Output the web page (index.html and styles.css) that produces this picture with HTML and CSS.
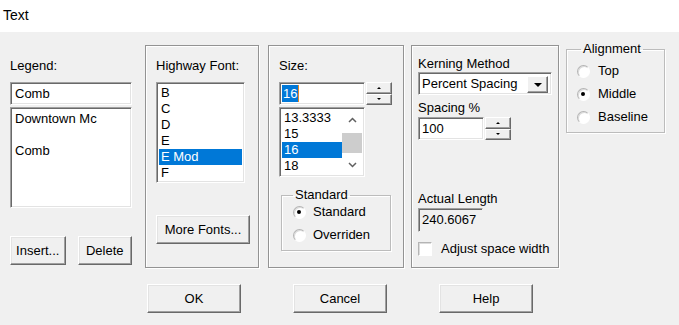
FILE: index.html
```html
<!DOCTYPE html>
<html lang="en">
<head>
    <meta charset="UTF-8">
    <title>Text</title>
    <link rel="stylesheet" href="styles.css">
</head>
<body>
    <div class="caption">Text</div>

    <div class="dialog">
        <div class="panels">

            <!-- legend text -->
            <div class="legend-col">
                <div class="label">Legend:</div>
                <div class="field legend-input">Comb</div>
                <div class="field legend-list">
                    <div class="line">Downtown Mc</div>
                    <div class="line"></div>
                    <div class="line">Comb</div>
                </div>
                <div class="legend-buttons">
                    <div class="button insert">Insert...</div>
                    <div class="button delete">Delete</div>
                </div>
            </div>

            <!-- font -->
            <div class="panel font-panel">
                <div class="label">Highway Font:</div>
                <div class="field font-list">
                    <div class="item">B</div>
                    <div class="item">C</div>
                    <div class="item">D</div>
                    <div class="item">E</div>
                    <div class="item selected">E Mod</div>
                    <div class="item">F</div>
                </div>
                <div class="button more-fonts">More Fonts...</div>
            </div>

            <!-- size -->
            <div class="panel size-panel">
                <div class="label">Size:</div>
                <div class="spin-row">
                    <div class="field size-input"><span class="sel">16</span></div>
                    <div class="spin">
                        <div class="spin-btn"><span class="up"></span></div>
                        <div class="spin-btn"><span class="down"></span></div>
                    </div>
                </div>
                <div class="field size-list">
                    <div class="size-items">
                        <div class="item">13.3333</div>
                        <div class="item">15</div>
                        <div class="item selected">16</div>
                        <div class="item">18</div>
                    </div>
                    <div class="scrollbar">
                        <svg width="9" height="6" viewBox="0 0 9 6"><path d="M1 5 L4.5 1.5 L8 5" fill="none" stroke="#606060" stroke-width="1.5"/></svg>
                        <div class="thumb"></div>
                        <svg width="9" height="6" viewBox="0 0 9 6"><path d="M1 1 L4.5 4.5 L8 1" fill="none" stroke="#606060" stroke-width="1.5"/></svg>
                    </div>
                </div>
                <fieldset class="group standard-group">
                    <legend>Standard</legend>
                    <div class="option"><span class="radio checked"></span>Standard</div>
                    <div class="option"><span class="radio"></span>Overriden</div>
                </fieldset>
            </div>

            <!-- kerning -->
            <div class="panel kern-panel">
                <div class="label">Kerning Method</div>
                <div class="field combo">
                    <div class="combo-text">Percent Spacing</div>
                    <div class="combo-btn"><span class="arrow"></span></div>
                </div>
                <div class="label spacing-label">Spacing %</div>
                <div class="spin-row spacing-row">
                    <div class="field spacing-input">100</div>
                    <div class="spin">
                        <div class="spin-btn"><span class="up"></span></div>
                        <div class="spin-btn"><span class="down"></span></div>
                    </div>
                </div>
                <div class="label length-label">Actual Length</div>
                <div class="field readonly">240.6067</div>
                <div class="check-row"><span class="checkbox"></span>Adjust space width</div>
            </div>

            <!-- alignment -->
            <fieldset class="group align-group">
                <legend>Alignment</legend>
                <div class="option"><span class="radio"></span>Top</div>
                <div class="option"><span class="radio checked"></span>Middle</div>
                <div class="option"><span class="radio"></span>Baseline</div>
            </fieldset>
        </div>

        <div class="actions">
            <div class="button">OK</div>
            <div class="button">Cancel</div>
            <div class="button">Help</div>
        </div>
    </div>
</body>
</html>
```

FILE: styles.css
```css
* {
    box-sizing: border-box;
}

body {
    margin: 0;
    background-color: #f0f0f0;
    font-family: "Liberation Sans", Arial, sans-serif;
    font-size: 13px;
    line-height: 16px;
    color: #000;
}

.caption {
    height: 32px;
    background-color: #fff;
    font-size: 14px;
    padding: 7px 0 0 3px;
}

.dialog {
    height: 293px;
    padding: 13px 0 0 10px;
}

.panels {
    display: flex;
    align-items: flex-start;
}

.label {
    height: 16px;
    white-space: nowrap;
}

/* sunken 3d field */
.field {
    background-color: #fff;
    border: 1px solid;
    border-color: #a0a0a0 #fff #fff #a0a0a0;
    box-shadow: inset 1px 1px #696969, inset -1px -1px #e3e3e3;
    white-space: nowrap;
    overflow: hidden;
}

/* raised 3d button */
.button {
    display: flex;
    align-items: center;
    justify-content: center;
    height: 29px;
    background-color: #f0f0f0;
    border: 1px solid;
    border-color: #fff #696969 #696969 #fff;
    box-shadow: inset -1px -1px #a0a0a0, inset 1px 1px #e3e3e3;
    white-space: nowrap;
}

/* etched frame */
.panel {
    height: 223px;
    border: 1px solid #939393;
    box-shadow: inset 1px 1px #fff, 1px 1px #fff;
}

.item {
    height: 16px;
    padding-left: 2px;
}

.item.selected {
    background-color: #0078d7;
    color: #fff;
}

/* legend column */
.legend-col {
    width: 122px;
    padding-top: 13px;
    display: flex;
    flex-direction: column;
}

.legend-input {
    margin-top: 8px;
    height: 23px;
    padding: 3px 0 0 4px;
}

.legend-list {
    margin-top: 2px;
    height: 101px;
    padding: 3px 0 0 4px;
}

.legend-list .line {
    height: 16px;
}

.legend-buttons {
    display: flex;
    gap: 12px;
    margin-top: 28px;
}

.insert {
    width: 56px;
}

.delete {
    width: 55px;
}

/* font panel */
.font-panel {
    width: 114px;
    margin-left: 13px;
    padding: 12px 0 0 10px;
}

.font-list {
    margin-top: 8px;
    width: 89px;
    height: 101px;
    padding: 2px;
}

.more-fonts {
    margin-top: 32px;
    width: 94px;
}

/* size panel */
.size-panel {
    width: 136px;
    margin-left: 9px;
    padding: 12px 0 0 10px;
}

.spin-row {
    display: flex;
    margin-top: 8px;
}

.size-input {
    width: 86px;
    height: 23px;
    padding: 2px 0 0 2px;
}

.sel {
    display: inline-block;
    height: 17px;
    line-height: 17px;
    padding: 0 1px;
    background-color: #0078d7;
    color: #fff;
    border-right: 1px solid #e0882a;
}

.spin {
    display: flex;
    flex-direction: column;
    width: 26px;
    height: 23px;
    margin-left: 1px;
}

.spin-btn {
    flex: 1;
    display: flex;
    align-items: center;
    justify-content: center;
    background-color: #f0f0f0;
    border: 1px solid;
    border-color: #fff #696969 #696969 #fff;
    box-shadow: inset -1px -1px #a0a0a0;
}

.up {
    border-left: 2px solid transparent;
    border-right: 2px solid transparent;
    border-bottom: 2px solid #000;
}

.down {
    border-left: 2px solid transparent;
    border-right: 2px solid transparent;
    border-top: 2px solid #000;
}

.size-list {
    display: flex;
    margin-top: 2px;
    width: 86px;
    height: 70px;
    padding: 2px;
}

.size-items {
    flex: 1;
}

.scrollbar {
    width: 20px;
    display: flex;
    flex-direction: column;
    align-items: center;
    justify-content: space-between;
    padding: 7px 0 6px;
    background-color: #fff;
}

.thumb {
    width: 20px;
    height: 20px;
    background-color: #cdcdcd;
}

/* group boxes */
.group {
    margin: 0;
    min-width: 0;
    border: 1px solid #bcbcbc;
    box-shadow: inset 1px 1px #fff, 1px 1px #fff;
}

.group legend {
    padding: 0 2px;
    line-height: 16px;
}

.option {
    display: flex;
    align-items: center;
    height: 16px;
    white-space: nowrap;
}

.radio {
    position: relative;
    width: 13px;
    height: 13px;
    border-radius: 50%;
    background-color: #fff;
    border: 1px solid;
    border-color: #b4b4b4 #fff #fff #b4b4b4;
    box-shadow: inset 1px 1px #dcdcdc;
}

.radio.checked::after {
    content: "";
    position: absolute;
    left: 3px;
    top: 3px;
    width: 4px;
    height: 4px;
    border-radius: 50%;
    background-color: #000;
}

.standard-group {
    margin: 10px 0 0 2px;
    width: 110px;
    height: 64px;
    padding: 1px 0 0 11px;
    display: flex;
    flex-direction: column;
    gap: 7px;
}

.standard-group .radio {
    margin-right: 7px;
}

/* kerning panel */
.kern-panel {
    width: 148px;
    margin-left: 7px;
    padding: 10px 0 0 6px;
}

.combo {
    display: flex;
    width: 134px;
    height: 23px;
    padding: 2px;
}

.combo-text {
    flex: 1;
    padding: 1px 0 0 1px;
}

.combo-btn {
    display: flex;
    align-items: center;
    justify-content: center;
    width: 21px;
    margin: 1px 1px 0 0;
    height: 17px;
    background-color: #f0f0f0;
    border: 1px solid;
    border-color: #fff #696969 #696969 #fff;
    box-shadow: inset -1px -1px #a0a0a0;
}

.arrow {
    border-left: 4px solid transparent;
    border-right: 4px solid transparent;
    border-top: 4px solid #000;
}

.spacing-label {
    margin-top: 5px;
}

.spacing-row {
    margin-top: 1px;
}

.spacing-input {
    width: 66px;
    height: 23px;
    padding: 3px 0 0 3px;
}

.length-label {
    margin-top: 51px;
}

.readonly {
    margin-top: 1px;
    width: 65px;
    height: 24px;
    padding: 3px 0 0 3px;
    background-color: #f0f0f0;
    box-shadow: inset 1px 1px #696969;
    border-color: #a0a0a0 #f0f0f0 #f0f0f0 #a0a0a0;
}

.check-row {
    display: flex;
    align-items: center;
    margin-top: 9px;
    height: 16px;
    white-space: nowrap;
}

.checkbox {
    width: 14px;
    height: 14px;
    margin-right: 9px;
    background-color: #fff;
    border: 1px solid;
    border-color: #b4b4b4 #fff #fff #b4b4b4;
    box-shadow: inset 1px 1px #dcdcdc;
}

/* alignment */
.align-group {
    margin: -4px 0 0 7px;
    width: 99px;
    height: 92px;
    padding: 6px 0 0 10px;
    display: flex;
    flex-direction: column;
    gap: 7px;
}

.align-group legend {
    margin-left: 4px;
}

.align-group .radio {
    margin-right: 8px;
}

/* bottom buttons */
.actions {
    display: flex;
    gap: 52px;
    margin-top: 16px;
    padding-left: 137px;
}

.actions .button {
    width: 94px;
}
```
